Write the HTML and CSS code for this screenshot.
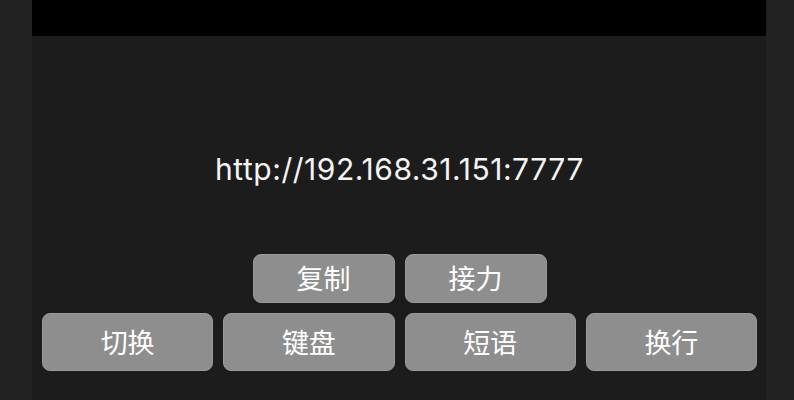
FILE: index.html
```html
<!DOCTYPE html>
<html lang="zh">
<head>
<meta charset="utf-8">
<link rel="stylesheet" href="styles.css">
</head>
<body>
<div class="panel">
  <div class="topbar"></div>
  <div class="content">
    <div class="url">http://192.168.31.151:7777</div>
    <div class="row row-small">
      <button class="btn small">复制</button>
      <button class="btn small">接力</button>
    </div>
    <div class="row row-main">
      <button class="btn">切换</button>
      <button class="btn">键盘</button>
      <button class="btn">短语</button>
      <button class="btn">换行</button>
    </div>
  </div>
</div>
</body>
</html>
```
FILE: styles.css
```css
html, body {
  margin: 0;
  padding: 0;
  background: #222222;
  height: 100%;
  overflow: hidden;
}
.panel {
  width: 734px;
  margin-left: 32px;
  height: 400px;
  background: #1c1c1c;
  display: flex;
  flex-direction: column;
}
.topbar {
  height: 36px;
  background: #000;
}
.content {
  display: flex;
  flex-direction: column;
  padding: 0 9px 0 10px;
}
.url {
  margin-top: 113px;
  height: 40px;
  line-height: 40px;
  text-align: center;
  color: #f4f4f4;
  font-family: Inter, "Noto Sans", sans-serif;
  font-size: 30px;
  letter-spacing: 0.55px;
}
.row {
  display: flex;
  gap: 10px;
}
.row-small {
  margin-top: 65px;
  justify-content: center;
}
.row-main {
  margin-top: 10px;
}
.btn {
  flex: 1;
  height: 58px;
  border: 1px solid #9a9a9a;
  border-radius: 8px;
  background: #8e8e8e;
  color: #ffffff;
  font-family: "Noto Sans CJK SC", "Noto Sans", sans-serif;
  font-size: 27px;
  line-height: 1;
  padding: 0 0 2px 0;
  margin: 0;
}
.btn.small {
  flex: 0 0 142px;
  height: 49px;
}
```
